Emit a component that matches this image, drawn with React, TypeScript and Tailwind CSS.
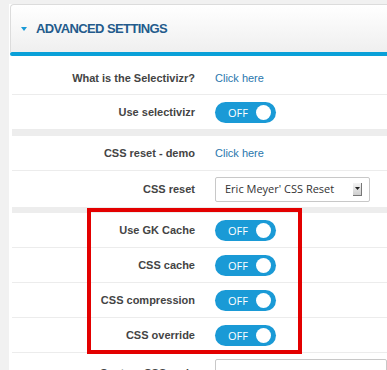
const label = "w-[183px] shrink-0 text-right text-[11px] font-bold text-[#444]";

function Toggle() {
  return (
    <div className="flex h-[21px] w-[61px] items-center justify-between rounded-full bg-[#1a9ad6] pl-[13px] pr-[5px]">
      <span className="font-['Open_Sans',sans-serif] text-[11px] leading-none text-white">OFF</span>
      <span className="h-[15px] w-[15px] rounded-full bg-white" />
    </div>
  );
}

function Row({ name, children, first }: { name: string; children: React.ReactNode; first?: boolean }) {
  return (
    <div className={"flex items-center gap-[20px] border-b border-[#ececec] " + (first ? "h-[39px] pt-[6px]" : "h-[35px]")}>
      <span className={label}>{name}</span>
      {children}
    </div>
  );
}

function Link() {
  return <a className="text-[11px] text-[#2a77ad]">Click here</a>;
}

export default function App() {
  return (
    <div className="relative h-[370px] w-[387px] overflow-hidden bg-[#f1f1f1] pl-[9px] font-['Liberation_Sans',Arial,sans-serif]">
      <div className="h-full bg-white pl-[1px]">
        <div className="mt-[4px] flex h-[48px] items-center gap-[9px] rounded-tl-[4px] border-l border-t border-[#dcdcdc] bg-gradient-to-b from-white to-[#efefef] pl-[10px] pt-[1px]">
          <svg width="6" height="4" viewBox="0 0 6 4">
            <path d="M0 0h6L3 4z" fill="#1a9ad6" />
          </svg>
          <span className="text-[13px] font-bold tracking-[-0.6px] text-[#235b8c]">ADVANCED SETTINGS</span>
        </div>
        <div className="h-[4px] rounded-l-[3px] bg-[#0aa0d8]" />
        <div className="pl-[2px]">
          <Row name="What is the Selectivizr?" first>
            <Link />
          </Row>
          <Row name="Use selectivizr">
            <Toggle />
          </Row>
          <div className="h-[6px] bg-[#ededed]" />
          <Row name="CSS reset - demo">
            <Link />
          </Row>
          <div className="flex h-[36px] items-center gap-[20px]">
            <span className={label}>CSS reset</span>
            <div className="flex h-[25px] w-[155px] items-center justify-between rounded-[2px] border border-[#c8c8c8] bg-white pl-[9px] pr-[7px]">
              <span className="font-['Open_Sans',sans-serif] text-[11px] text-[#333]">Eric Meyer' CSS Reset</span>
              <span className="flex h-[13px] w-[9px] items-center justify-center border-r border-b border-[#777] bg-gradient-to-b from-[#f4f4f4] to-[#cfcfcf]">
                <svg width="5" height="3" viewBox="0 0 5 3">
                  <path d="M0 0h5L2.5 3z" fill="#222" />
                </svg>
              </span>
            </div>
          </div>
          <div className="h-[6px] bg-[#ededed]" />
          <Row name="Use GK Cache">
            <Toggle />
          </Row>
          <Row name="CSS cache">
            <Toggle />
          </Row>
          <Row name="CSS compression">
            <Toggle />
          </Row>
          <Row name="CSS override">
            <Toggle />
          </Row>
          <div className="flex gap-[20px] pt-[6px]">
            <span className={label + " pt-[6px]"}>Custom CSS code</span>
            <div className="h-[60px] flex-1 rounded-[2px] border border-[#c8c8c8] bg-white" />
          </div>
        </div>
      </div>
      <div className="absolute left-[87px] top-[208px] h-[146px] w-[215px] border-4 border-[#e30000]" />
    </div>
  );
}
